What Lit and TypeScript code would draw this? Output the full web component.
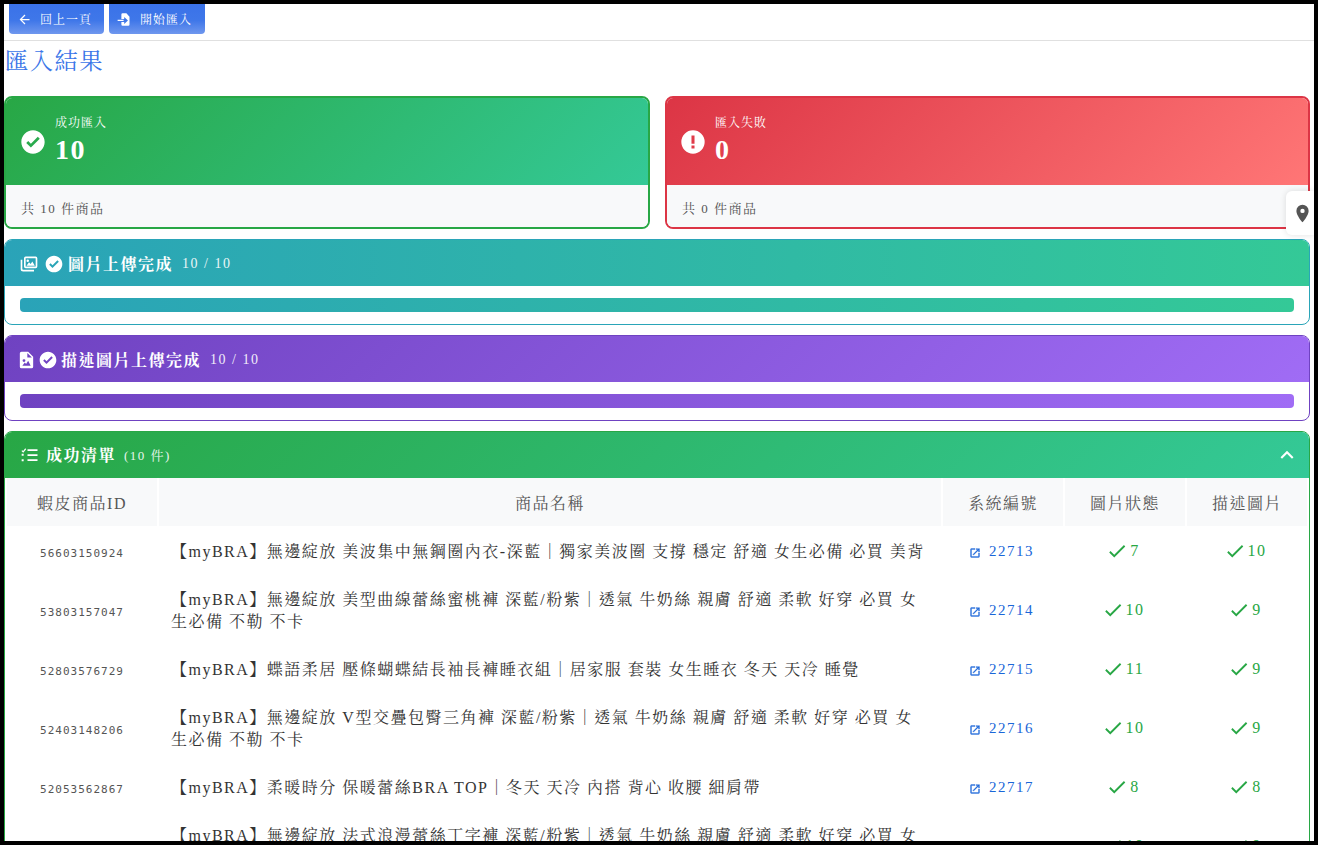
import { LitElement, html, css, svg } from "lit";
import { customElement } from "lit/decorators.js";

const ICON = {
  arrow: "M20,11V13H8L13.5,18.5L12.08,19.92L4.16,12L12.08,4.08L13.5,5.5L8,11H20Z",
  fileImport: "M9 2h6l5 5.500V20a2 2 0 0 1-2 2H9a2 2 0 0 1-2-2v-4h4.500v3l6-5.500-6-5.500v3H7V4a2 2 0 0 1 2-2ZM1 12.500h9.500v2H1v-2Z",
  checkCircle: "M12 2C6.5 2 2 6.5 2 12s4.5 10 10 10 10-4.500 10-10S17.500 2 12 2Zm-1.800 14.800-4-4 1.700-1.700 2.300 2.300 5.900-5.900 1.700 1.700-7.600 7.600Z",
  alert: "M13.300 13.500h-2.600V6.500h2.600M13.300 17.500h-2.600V15h2.600M12,2A10,10 0 0,0 2,12A10,10 0 0,0 12,22A10,10 0 0,0 22,12A10,10 0 0,0 12,2Z",
  images: "M8 3h12a2 2 0 0 1 2 2v10a2 2 0 0 1-2 2H8a2 2 0 0 1-2-2V5a2 2 0 0 1 2-2Zm0 2v10h12V5H8Zm2.500 1.500a1.500 1.500 0 1 1 0 3 1.500 1.500 0 0 1 0-3ZM9 14l3-4 2 2 2-3 3 5H9ZM2 7h2v11a1 1 0 0 0 1 1h13v2H5a3 3 0 0 1-3-3V7Z",
  fileImage: "M6 2a2 2 0 0 0-2 2v16a2 2 0 0 0 2 2h12a2 2 0 0 0 2-2V8l-6-6H6Zm7 1.500L18.500 9H13V3.500ZM9 11a1.700 1.700 0 1 1 0 3.400A1.700 1.700 0 0 1 9 11Zm-2 8 3-4 1.500 1.800L14 13l3 6H7Z",
  list: "M9 5h12v2.200H9V5Zm0 6h12v2.200H9V11Zm0 6h12v2.200H9V17ZM2.800 6.200l1 1L6.300 4 7.400 5 3.900 9.300 1.700 7.300l1.100-1.100ZM2 10.500h2.400v2.400H2v-2.400Zm0 6.500h2.400v2.400H2V17Z",
  chevron: "M7.410 15.410L12 10.830l4.590 4.580L18 14l-6-6-6 6 1.410 1.410Z",
  open: "M14,3V5H17.590L7.760,14.830L9.170,16.240L19,6.410V10H21V3M19,19H5V5H12V3H5C3.890,3 3,3.900 3,5V19A2,2 0 0,0 5,21H19A2,2 0 0,0 21,19V12H19V19Z",
  check: "M21,7L9,19L3.500,13.500L4.910,12.090L9,16.170L19.590,5.590L21,7Z",
  pin: "M12,11.500A2.500,2.500 0 0,1 9.500,9A2.500,2.500 0 0,1 12,6.500A2.500,2.500 0 0,1 14.500,9A2.500,2.500 0 0,1 12,11.500M12,2A7,7 0 0,0 5,9C5,14.250 12,22 12,22C12,22 19,14.250 19,9A7,7 0 0,0 12,2Z",
};

const icon = (d: string, cls = "", vb = "0 0 24 24") =>
  html`<svg class="ic ${cls}" viewBox=${vb} aria-hidden="true">${svg`<path d=${d} fill="currentColor"></path>`}</svg>`;

const ROWS = [
  ["56603150924", "【myBRA】無邊綻放 美波集中無鋼圈內衣-深藍｜獨家美波圈 支撐 穩定 舒適 女生必備 必買 美背", "22713", "7", "10"],
  ["53803157047", "【myBRA】無邊綻放 美型曲線蕾絲蜜桃褲 深藍/粉紫｜透氣 牛奶絲 親膚 舒適 柔軟 好穿 必買 女生必備 不勒 不卡", "22714", "10", "9"],
  ["52803576729", "【myBRA】蝶語柔居 壓條蝴蝶結長袖長褲睡衣組｜居家服 套裝 女生睡衣 冬天 天冷 睡覺", "22715", "11", "9"],
  ["52403148206", "【myBRA】無邊綻放 V型交疊包臀三角褲 深藍/粉紫｜透氣 牛奶絲 親膚 舒適 柔軟 好穿 必買 女生必備 不勒 不卡", "22716", "10", "9"],
  ["52053562867", "【myBRA】柔暖時分 保暖蕾絲BRA TOP｜冬天 天冷 內搭 背心 收腰 細肩帶", "22717", "8", "8"],
  ["51803148211", "【myBRA】無邊綻放 法式浪漫蕾絲丁字褲 深藍/粉紫｜透氣 牛奶絲 親膚 舒適 柔軟 好穿 必買 女生必備 不勒 不卡", "22718", "10", "9"],
];

@customElement("app-root")
export class AppRoot extends LitElement {
  static styles = css`
    :host {
      display: block;
      position: relative;
      width: 1318px;
      height: 845px;
      box-sizing: border-box;
      border: 4px solid #000;
      overflow: hidden;
      background: #fff;
      font-family: "Liberation Serif", "Noto Serif CJK TC", "AR PL UMing TW", "Noto Sans CJK TC", serif;
      letter-spacing: 1.5px;
      color: #333;
    }
    .ic { display: block; flex: none; width: 1em; height: 1em; }
    .toolbar {
      display: flex;
      gap: 5px;
      height: 37px;
      padding-left: 5px;
      box-sizing: border-box;
      border-bottom: 1px solid #e0e0e0;
    }
    .btn {
      display: flex;
      align-items: center;
      gap: 8px;
      height: 30px;
      width: 95px;
      padding-left: 8px;
      box-sizing: border-box;
      border-radius: 0 0 4px 4px;
      background: linear-gradient(180deg, #3a72e8 0%, #3f77e9 55%, #6f97ee 100%);
      color: #fff;
      font-size: 12px;
      letter-spacing: 1px;
    }
    .btn + .btn { width: 96px; }
    .btn .ic { font-size: 15px; }
    h1 {
      margin: 6px 0 20px 1px;
      font-size: 23.25px;
      line-height: 29px;
      font-weight: 400;
      color: #3b76e8;
    }
    .content { padding-right: 4px; display: flex; flex-direction: column; gap: 10px; }
    .stats { display: grid; grid-template-columns: 646px 645px; gap: 15px; }
    .stat {
      border: 2px solid;
      border-radius: 8px;
      overflow: hidden;
      height: 133px;
      box-sizing: border-box;
      display: flex;
      flex-direction: column;
    }
    .stat.ok { border-color: #28a745; }
    .stat.bad { border-color: #dc3545; }
    .stat-head {
      height: 87px;
      flex: none;
      display: flex;
      align-items: center;
      gap: 8px;
      padding-left: 13px;
      color: #fff;
    }
    .ok .stat-head { background: linear-gradient(135deg, #28a745, #34c997); }
    .bad .stat-head { background: linear-gradient(135deg, #dc3545, #ff7676); padding-left: 12px; }
    .stat-head > .ic { font-size: 28px; }
    .stat-text { padding-bottom: 3px; }
    .stat-label { font-size: 12px; letter-spacing: 1px; line-height: 16px; }
    .stat-num { font-size: 28px; line-height: 32px; margin-top: 3px; font-weight: 700; }
    .stat-foot {
      flex: 1;
      background: #f8f9fa;
      display: flex;
      align-items: center;
      padding: 2px 0 0 15px;
      font-size: 13px;
      color: #555;
    }
    .prog { border: 1px solid; border-radius: 8px; overflow: hidden; height: 86px; box-sizing: border-box; }
    .prog.teal { border-color: #2aa5b8; }
    .prog.purple { border-color: #6f42c1; }
    .prog-head {
      height: 46px;
      box-sizing: border-box;
      padding: 1px 0 0 14px;
      display: flex;
      align-items: center;
      gap: 4px;
      color: #fff;
    }
    .prog-head .ic { font-size: 20px; }
    .prog-head .ic.images { margin-right: 1px; }
    .prog-head .ic.doc { width: 15px; }
    .teal .prog-head, .teal .fill { background: linear-gradient(90deg, #2aa3b8, #34c997); }
    .purple .prog-head { background: linear-gradient(135deg, #6f42c1, #a06cf5); }
    .purple .fill { background: linear-gradient(90deg, #6f42c1, #a06cf5); }
    .prog-title { font-size: 16px; font-weight: 700; margin-bottom: 1px; }
    .purple .prog-title { margin-left: -1px; }
    .prog-count { font-size: 14px; margin-left: 5px; opacity: 0.9; }
    .track { padding: 12px 15px; }
    .fill { height: 14px; border-radius: 4px; }
    .list { border: 1px solid #28a745; border-radius: 8px 8px 0 0; }
    .list-head {
      height: 46px;
      box-sizing: border-box;
      display: flex;
      align-items: center;
      padding: 0 9px 0 15px;
      color: #fff;
      border-radius: 7px 7px 0 0;
      background: linear-gradient(135deg, #28a745, #34c997);
    }
    .list-head .ic { font-size: 20px; }
    .list-title { font-size: 16px; font-weight: 700; margin-left: 6px; margin-bottom: 1px; }
    .list-count { font-size: 13px; margin-left: 8px; margin-bottom: 1px; opacity: 0.9; }
    .list-head .ic.chev { margin-left: auto; font-size: 26px; }
    table { border-collapse: separate; border-spacing: 2px 0; width: 1304px; table-layout: fixed; }
    .c-id { width: 150px; }
    .c-num { width: 120px; }
    th {
      height: 49px;
      box-sizing: border-box;
      padding: 0;
      border-bottom: 1px solid #fff;
      background: #f8f9fa;
      font-size: 16px;
      font-weight: 400;
      color: #555;
      text-align: center;
    }
    td {
      padding: 13px 12px;
      box-sizing: border-box;
      font-size: 16px;
      line-height: 22px;
      text-align: center;
      color: #333;
    }
    td.name { text-align: left; padding: 14px 12px 12px; }
    td.id {
      padding: 16px 12px 10px;
      font-family: "DejaVu Sans Mono", monospace;
      font-size: 11px;
      letter-spacing: 1px;
      color: #555;
    }
    .link, .good { display: inline-flex; align-items: center; height: 22px; vertical-align: top; }
    .link { font-size: 15px; color: #1a66d8; gap: 8px; padding-right: 3px; }
    .link .ic { font-size: 12px; margin-top: 3px; stroke: currentColor; stroke-width: 0.6; }
    .good { font-size: 16px; color: #28a745; gap: 2px; padding-right: 4px; }
    .good .ic { font-size: 22px; }
    .pin {
      position: absolute;
      right: 0;
      top: 187px;
      width: 28px;
      height: 44px;
      display: flex;
      align-items: center;
      justify-content: center;
      box-sizing: border-box;
      padding-left: 4px;
      background: #fff;
      color: #555;
      border-radius: 6px 0 0 6px;
      box-shadow: 0 0 6px rgba(0, 0, 0, 0.12);
      font-size: 21px;
    }
  `;

  render() {
    return html`
      <div class="toolbar">
        <div class="btn">${icon(ICON.arrow)}<span>回上一頁</span></div>
        <div class="btn">${icon(ICON.fileImport)}<span>開始匯入</span></div>
      </div>
      <h1>匯入結果</h1>
      <div class="content">
        <div class="stats">
          <div class="stat ok">
            <div class="stat-head">
              ${icon(ICON.checkCircle)}
              <div class="stat-text"><div class="stat-label">成功匯入</div><div class="stat-num">10</div></div>
            </div>
            <div class="stat-foot">共 10 件商品</div>
          </div>
          <div class="stat bad">
            <div class="stat-head">
              ${icon(ICON.alert)}
              <div class="stat-text"><div class="stat-label">匯入失敗</div><div class="stat-num">0</div></div>
            </div>
            <div class="stat-foot">共 0 件商品</div>
          </div>
        </div>
        <div class="prog teal">
          <div class="prog-head">
            ${icon(ICON.images, "images")}${icon(ICON.checkCircle)}
            <span class="prog-title">圖片上傳完成</span><span class="prog-count">10 / 10</span>
          </div>
          <div class="track"><div class="fill"></div></div>
        </div>
        <div class="prog purple">
          <div class="prog-head">
            ${icon(ICON.fileImage, "doc", "3 0 18 24")}${icon(ICON.checkCircle)}
            <span class="prog-title">描述圖片上傳完成</span><span class="prog-count">10 / 10</span>
          </div>
          <div class="track"><div class="fill"></div></div>
        </div>
        <div class="list">
          <div class="list-head">
            ${icon(ICON.list)}
            <span class="list-title">成功清單</span><span class="list-count">(10 件)</span>
            ${icon(ICON.chevron, "chev")}
          </div>
          <table>
            <colgroup>
              <col class="c-id" /><col /><col class="c-num" /><col class="c-num" /><col class="c-num" />
            </colgroup>
            <thead>
              <tr><th>蝦皮商品ID</th><th>商品名稱</th><th>系統編號</th><th>圖片狀態</th><th>描述圖片</th></tr>
            </thead>
            <tbody>
              ${ROWS.map(
                (r) => html`<tr>
                  <td class="id">${r[0]}</td>
                  <td class="name">${r[1]}</td>
                  <td><span class="link">${icon(ICON.open)}${r[2]}</span></td>
                  <td><span class="good">${icon(ICON.check)}${r[3]}</span></td>
                  <td><span class="good">${icon(ICON.check)}${r[4]}</span></td>
                </tr>`
              )}
            </tbody>
          </table>
        </div>
      </div>
      <div class="pin">${icon(ICON.pin)}</div>
    `;
  }
}
